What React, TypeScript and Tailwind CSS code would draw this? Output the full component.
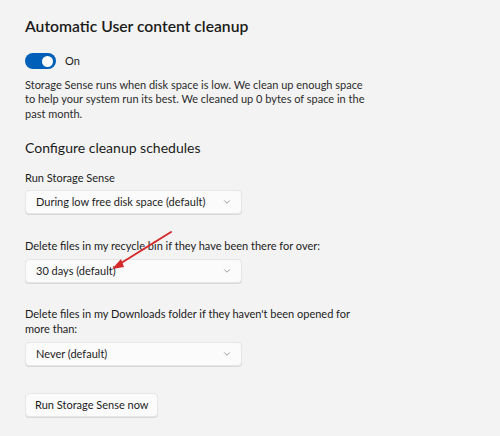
import { ChevronDown } from "lucide-react";

function Dropdown({ value }: { value: string }) {
  return (
    <div className="flex h-[24px] w-[217px] items-center justify-between rounded-[4px] border border-[#e6e6e6] bg-[#fbfbfb] pl-[10px] pr-[9px] shadow-[0_1px_0_#d9d9d9]">
      <span className="text-[11px] text-[#1b1b1b]">{value}</span>
      <ChevronDown className="h-[10px] w-[10px] text-[#777]" strokeWidth={1.75} />
    </div>
  );
}

export default function App() {
  return (
    <div
      className="relative h-[436px] w-[500px] overflow-hidden bg-[#f3f3f3] pl-[25px] pt-[15px] text-[#1b1b1b]"
      style={{ fontFamily: "Lato, sans-serif" }}
    >
      <h1 className="text-[15.7px] font-semibold leading-[22px]">
        Automatic User content cleanup
      </h1>

      <div className="mt-[16px] flex items-center gap-[9px]">
        <div className="flex h-[16px] w-[31px] items-center justify-end rounded-full bg-[#005fb8] pr-[3px]">
          <div className="h-[11px] w-[11px] rounded-full bg-white" />
        </div>
        <span className="text-[11px]">On</span>
      </div>

      <p className="mt-[8px] w-[345px] text-[11px] leading-[14.5px] text-[#2b2b2b]">
        Storage Sense runs when disk space is low. We clean up enough space to
        help your system run its best. We cleaned up 0 bytes of space in the
        past month.
      </p>

      <h2 className="mt-[17px] text-[14px] leading-[20px]">
        Configure cleanup schedules
      </h2>

      <div className="mt-[12px] text-[11px] leading-[15px]">Run Storage Sense</div>
      <div className="mt-[5px]">
        <Dropdown value="During low free disk space (default)" />
      </div>

      <div className="mt-[24px] text-[11px] leading-[15px]">
        Delete files in my recycle bin if they have been there for over:
      </div>
      <div className="mt-[6px]">
        <Dropdown value="30 days (default)" />
      </div>

      <div className="mt-[24px] w-[345px] text-[11px] leading-[14.5px]">
        Delete files in my Downloads folder if they haven't been opened for
        more than:
      </div>
      <div className="mt-[6px]">
        <Dropdown value="Never (default)" />
      </div>

      <button className="mt-[27px] h-[24px] rounded-[4px] border border-[#e6e6e6] bg-[#fbfbfb] px-[9px] text-[11px] shadow-[0_1px_0_#d9d9d9]">
        Run Storage Sense now
      </button>

      <svg
        className="absolute left-0 top-0"
        width="500"
        height="436"
        viewBox="0 0 500 436"
      >
        <line x1="171" y1="232" x2="118" y2="265" stroke="#d42a2a" strokeWidth="2" strokeLinecap="round" />
        <polygon points="112,269 121,259 124,267" fill="#d42a2a" />
      </svg>
    </div>
  );
}
